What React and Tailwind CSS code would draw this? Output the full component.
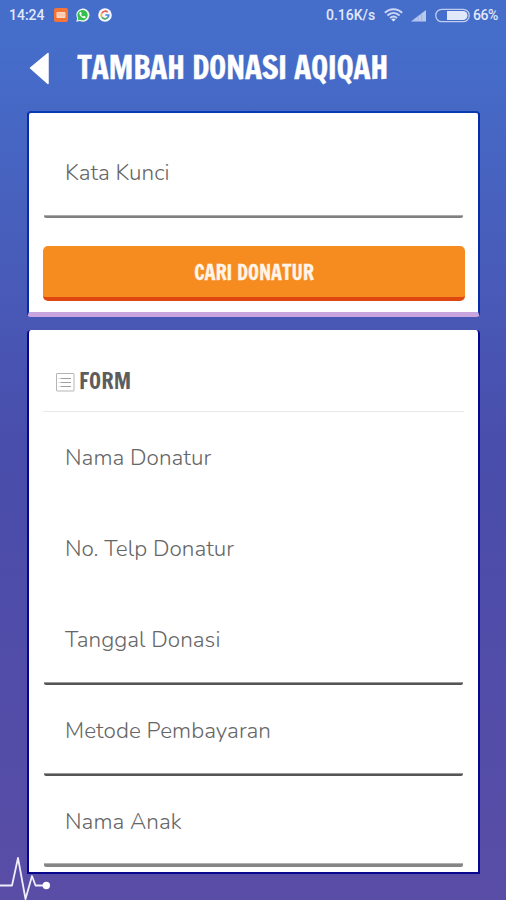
const fields = [
  { label: "Nama Donatur", line: "" },
  { label: "No. Telp Donatur", line: "" },
  { label: "Tanggal Donasi", line: "h-[3px] border-t border-[#999] bg-[#555]" },
  { label: "Metode Pembayaran", line: "h-[3px] border-t border-[#999] bg-[#555]" },
  { label: "Nama Anak", line: "h-[4px] border-t border-[#b0b0b0] bg-[#858585]" },
];

function Field({ label, line }) {
  return (
    <div className="flex h-[91px] flex-col">
      <div className="flex flex-1 items-center pl-[22px]">
        <span className="font-['Nunito','Lato',sans-serif] text-[22.5px] leading-[23px] font-light tracking-[0.05px] text-[#666]">
          {label}
        </span>
      </div>
      {line && <div className={`mx-[1px] -mt-[3px] rounded-b-[2px] ${line}`}></div>}
    </div>
  );
}

function StatusBar() {
  return (
    <header className="flex h-[30px] items-center pr-[8px] pl-[9px] font-['Roboto',sans-serif] text-[14px] font-medium text-[#e1e8fa]">
      <span className="w-[45px] whitespace-nowrap">14:24</span>
      <svg className="h-[14px] w-[14px]" viewBox="0 0 14 14">
        <rect width="14" height="14" rx="2" fill="#f47337" />
        <rect x="2.5" y="4" width="9" height="6" rx="1" fill="#fbd9c7" />
        <path d="M4 8.5V5.5h2v3M8 5.5v3M10 5.5v3" fill="none" stroke="#f6a277" strokeWidth=".6" />
      </svg>
      <svg className="ml-[7px] h-[15px] w-[15px]" viewBox="0 0 24 24">
        <path d="M2 22l1.5-5.5A10.5 10.5 0 1 1 7.7 20.6z" fill="#eefbf0" />
        <path d="M4.4 19.6l.9-3.5A8.2 8.2 0 1 1 8.2 18.7z" fill="#35be4b" />
        <path
          d="M8 6.5c-2.5 2.5.2 6.500 3.200 8.600 2.300 1.700 5 1.900 6.200-.7l-2.900-2-1.400 1.300c-1.600-.6-2.600-1.700-3.300-3.100l1.100-1.400-1.300-2.900z"
          fill="#fff"
        />
      </svg>
      <svg className="ml-[8px] h-[14px] w-[14px]" viewBox="0 0 14 14">
        <circle cx="7" cy="7" r="6.8" fill="#f6f8fd" />
        <g fill="none" strokeWidth="1.700">
          <path d="M4 5a3.700 3.700 0 0 1 5.700-.8" stroke="#e75b50" />
          <path d="M4 5a3.700 3.700 0 0 0 0 4.300" stroke="#efb83d" />
          <path d="M4 9.300a3.700 3.700 0 0 0 5.400.6" stroke="#4baa68" />
          <path d="M9.400 9.900A3.700 3.700 0 0 0 10.700 7H7.300" stroke="#4c86e8" />
        </g>
      </svg>
      <span className="ml-auto w-[50px] whitespace-nowrap">0.16K/s</span>
      <svg className="ml-[8px] h-[14px] w-[19px]" viewBox="0 0 19 14" fill="none" stroke="#cbd7f4" strokeWidth="1.900">
        <path d="M.8 4.800c5-4.800 12.400-4.800 17.400 0M3.400 7.500c3.700-3.400 8.500-3.400 12.200 0M6.100 10c2.200-2 4.600-2 6.800 0" />
        <path d="M7.300 11.500Q9.500 9.600 11.700 11.500L9.500 13.600z" fill="#e1e8fa" stroke="none" />
      </svg>
      <svg className="ml-[7px] h-[13px] w-[17px]" viewBox="0 0 17 13">
        <path d="M1 12.500L16 1v11.500z" fill="#b8c8ef" />
        <path d="M4.500 9v4M8 6.500V13M11.500 4v9" stroke="#8fa6e2" strokeWidth=".6" />
      </svg>
      <svg className="ml-[8px] h-[15px] w-[35px]" viewBox="0 0 35 15">
        <rect x=".8" y="1.300" width="33.400" height="12.400" rx="6" fill="none" stroke="#c0cdf1" strokeWidth="1.300" />
        <path d="M12 3h16a4.500 4.500 0 0 1 0 9H12z" fill="#e1e8fa" />
      </svg>
      <span className="ml-[3px] w-[25px] text-[14px] tracking-[-0.5px] whitespace-nowrap">66%</span>
    </header>
  );
}

function ListIcon() {
  return (
    <svg className="mt-[3px] h-[19px] w-[19px]" viewBox="0 0 19 19" fill="none" stroke="#b5b5b5">
      <rect x=".5" y=".5" width="17.500" height="17.500" rx=".5" />
      <path d="M4.500 5.500h10.500M4.500 9.500h10.500M4.500 13.500h10.500" stroke="#a0a0a0" />
      <path d="M2.500 5.500h1M2.500 9.500h1M2.500 13.500h1" stroke="#cfcfcf" />
    </svg>
  );
}

export default function App() {
  return (
    <div className="relative h-[900px] w-[506px] overflow-hidden bg-linear-to-b from-[#456dca] from-5% via-[#494dab] via-50% to-[#594da6]">
      <StatusBar />

      <div className="flex h-[81px] items-center pb-[5px] pl-[29px]">
        <svg className="h-[33px] w-[22px]" viewBox="0 0 22 33">
          <path d="M1.500 16L19 1.500v30z" fill="#fff" stroke="#fff" strokeWidth="1.500" strokeLinejoin="round" />
        </svg>
        <h1 className="ml-[26px] font-['Francois_One','Liberation_Sans_Narrow',sans-serif] text-[31.5px] leading-none font-normal tracking-[-0.42px] whitespace-nowrap text-white [-webkit-text-stroke:0.4px_white]">
          TAMBAH DONASI AQIQAH
        </h1>
      </div>

      {/* Search */}
      <section className="mx-[27px] h-[206px] w-[453px] rounded-[4px] border-x-2 border-t-2 border-b-[5px] border-x-[#082ba8] border-t-[#083bb2] border-b-[#c9a5df] bg-white px-[14px] pt-[14px]">
        <Field label="Kata Kunci" line="h-[3px] border-t border-[#aaa] bg-[#808080]" />
        <button className="mt-[28px] flex h-[55px] w-[422px] items-center justify-center rounded-[5px] border-b-[4px] border-[#df4710] bg-[#f68c1f]">
          <span className="pt-[2px] font-['Francois_One','Liberation_Sans_Narrow',sans-serif] text-[20px] leading-none font-normal tracking-[-0.1px] whitespace-nowrap text-[#fff4e9] [-webkit-text-stroke:0.3px_#fff4e9]">
            CARI DONATUR
          </span>
        </button>
      </section>

      {/* Form */}
      <section className="mx-[27px] mt-[13px] h-[544px] w-[453px] rounded-t-[4px] border-x-2 border-b-2 border-[#08058f] bg-white px-[14px]">
        <div className="flex h-[82px] items-center border-b border-[#e8e8e8] pt-[20px] pl-[13px]">
          <ListIcon />
          <h2 className="ml-[4px] font-['Francois_One','Liberation_Sans_Narrow',sans-serif] text-[22px] leading-none font-normal text-[#5d5d5d]">
            FORM
          </h2>
        </div>
        {fields.map((f) => (
          <Field key={f.label} label={f.label} line={f.line} />
        ))}
      </section>

      {/* pulse mark over the corner of the form */}
      <svg className="absolute bottom-0 left-0 h-[50px] w-[52px]" viewBox="0 0 52 50" fill="none" stroke="#efedfa" strokeWidth="1.800">
        <path d="M0 35.500H12L18 8l7.500 41L32 26l3.500 9.500H44" strokeLinejoin="round" />
        <circle cx="46.300" cy="35.500" r="3.700" fill="#fff" stroke="none" />
      </svg>
    </div>
  );
}
